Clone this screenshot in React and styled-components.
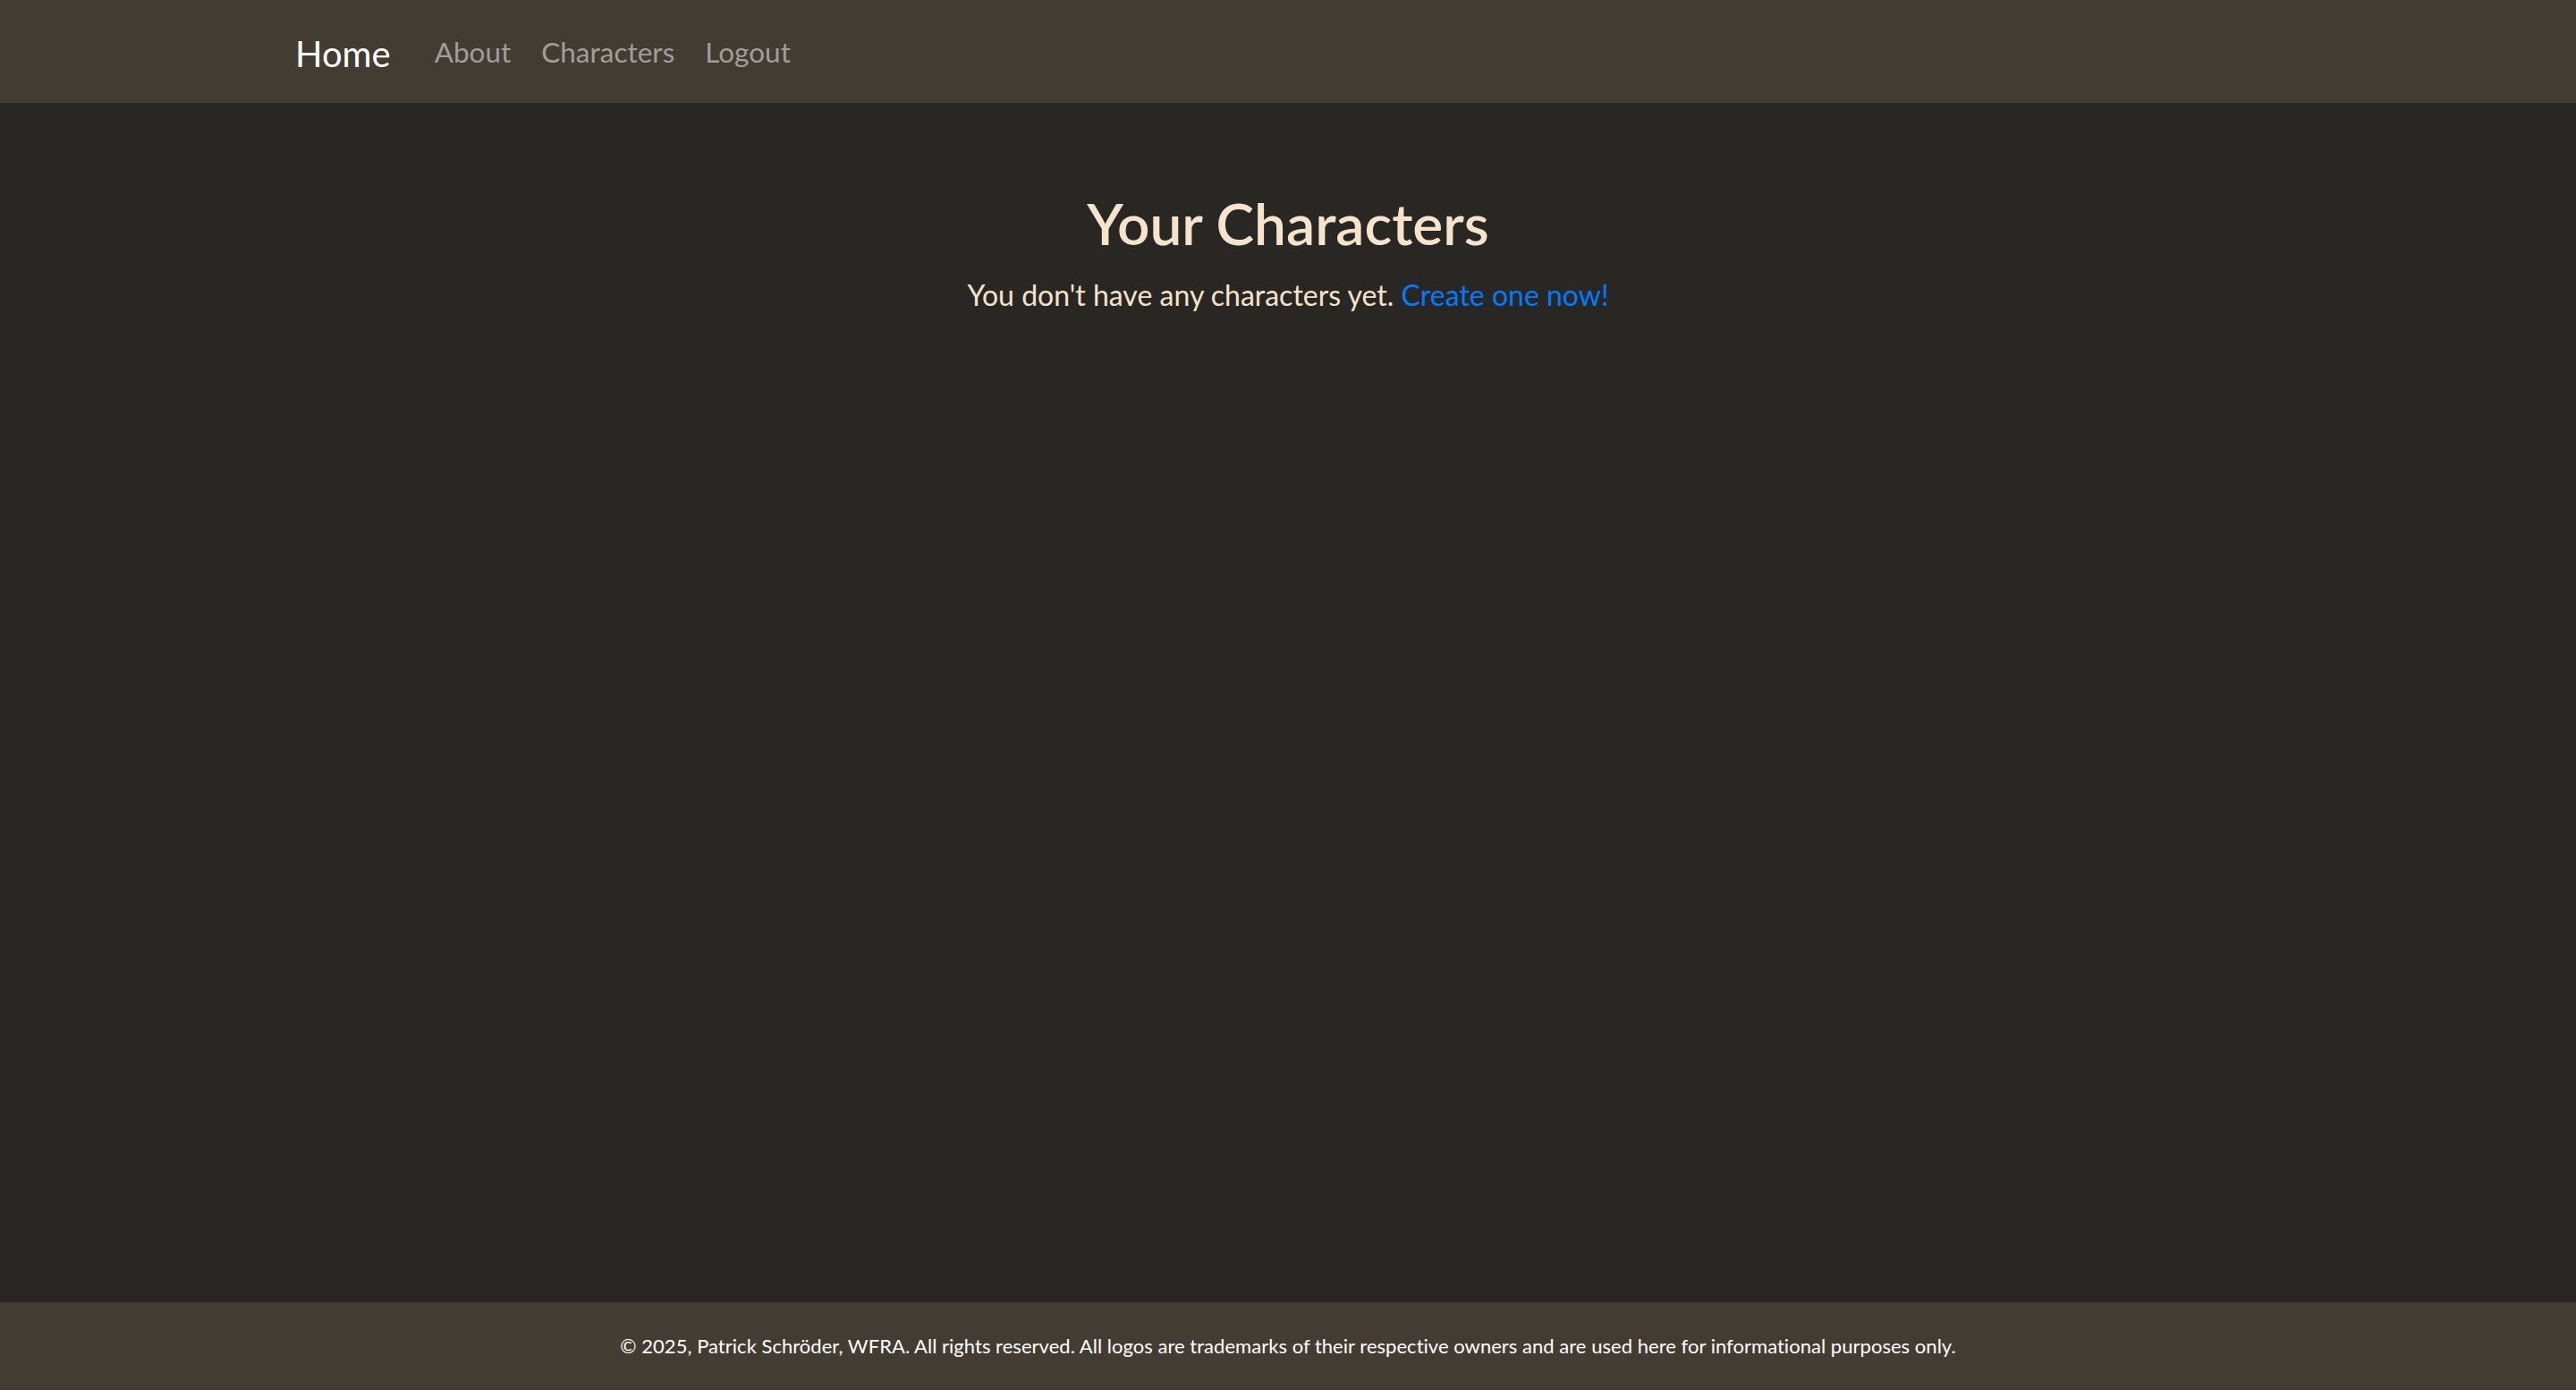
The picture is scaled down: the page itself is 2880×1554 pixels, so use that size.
import React from 'react'
import styled, { createGlobalStyle } from 'styled-components'

const GlobalStyle = createGlobalStyle`
    html, body {
        margin: 0;
        padding: 0;
    }

    body {
        font-family: "Segoe UI", Lato, "Noto Sans", sans-serif;
        background-color: #292723;
        color: #f5e3cb;
    }
`

const links = ['About', 'Characters', 'Logout']

const App = () => {
    return (
        <Page>
            <GlobalStyle />
            <NavBar>
                <Container>
                    <Brand href="#">Home</Brand>
                    <NavList>
                        {links.map((name) => (
                            <li key={name}>
                                <NavLink href="#">{name}</NavLink>
                            </li>
                        ))}
                    </NavList>
                </Container>
            </NavBar>

            <Main>
                <Title>Your Characters</Title>
                <Lead>
                    You don't have any characters yet. <a href="#">Create one now!</a>
                </Lead>
            </Main>

            <Footer>
                <p>
                    © 2025, Patrick Schröder, WFRA. All rights reserved. All logos are trademarks of
                    their respective owners and are used here for informational purposes only.
                </p>
            </Footer>
        </Page>
    )
}

const Page = styled.div`
    display: flex;
    flex-direction: column;
    min-height: 100vh;
`

const NavBar = styled.nav`
    height: 115px;
    background-color: #433c33;
    display: flex;
    align-items: center;
`

const Container = styled.div`
    width: 2280px;
    margin: 0 auto;
    padding: 0 30px;
    box-sizing: border-box;
    display: flex;
    align-items: center;
`

const Brand = styled.a`
    font-size: 40px;
    line-height: 58px;
    color: #ffffff;
    text-decoration: none;
    margin-right: 32px;
    padding-top: 4px;
`

const NavList = styled.ul`
    display: flex;
    list-style: none;
    margin: 0;
    padding: 0;
`

const NavLink = styled.a`
    display: block;
    padding: 0 17px;
    font-size: 31.5px;
    line-height: 48px;
    color: #a19d99;
    text-decoration: none;

    &:hover {
        color: #d0ccc8;
    }
`

const Main = styled.main`
    flex: 1;
    padding-top: 97px;
    text-align: center;
`

const Title = styled.h2`
    margin: 0 0 17px;
    font-size: 64px;
    font-weight: 600;
    line-height: 1.2;
    color: #f5e3cb;
`

const Lead = styled.p`
    margin: 0;
    font-size: 32px;
    line-height: 1.5;
    color: #f5e3cb;

    a {
        color: #007bff;
        text-decoration: none;
    }
`

const Footer = styled.footer`
    height: 98px;
    box-sizing: border-box;
    padding-top: 32px;
    background-color: #433c33;
    text-align: center;

    p {
        margin: 0;
        font-size: 22px;
        letter-spacing: 0.03px;
        line-height: 33px;
        color: #ffffff;
    }
`

export default App
